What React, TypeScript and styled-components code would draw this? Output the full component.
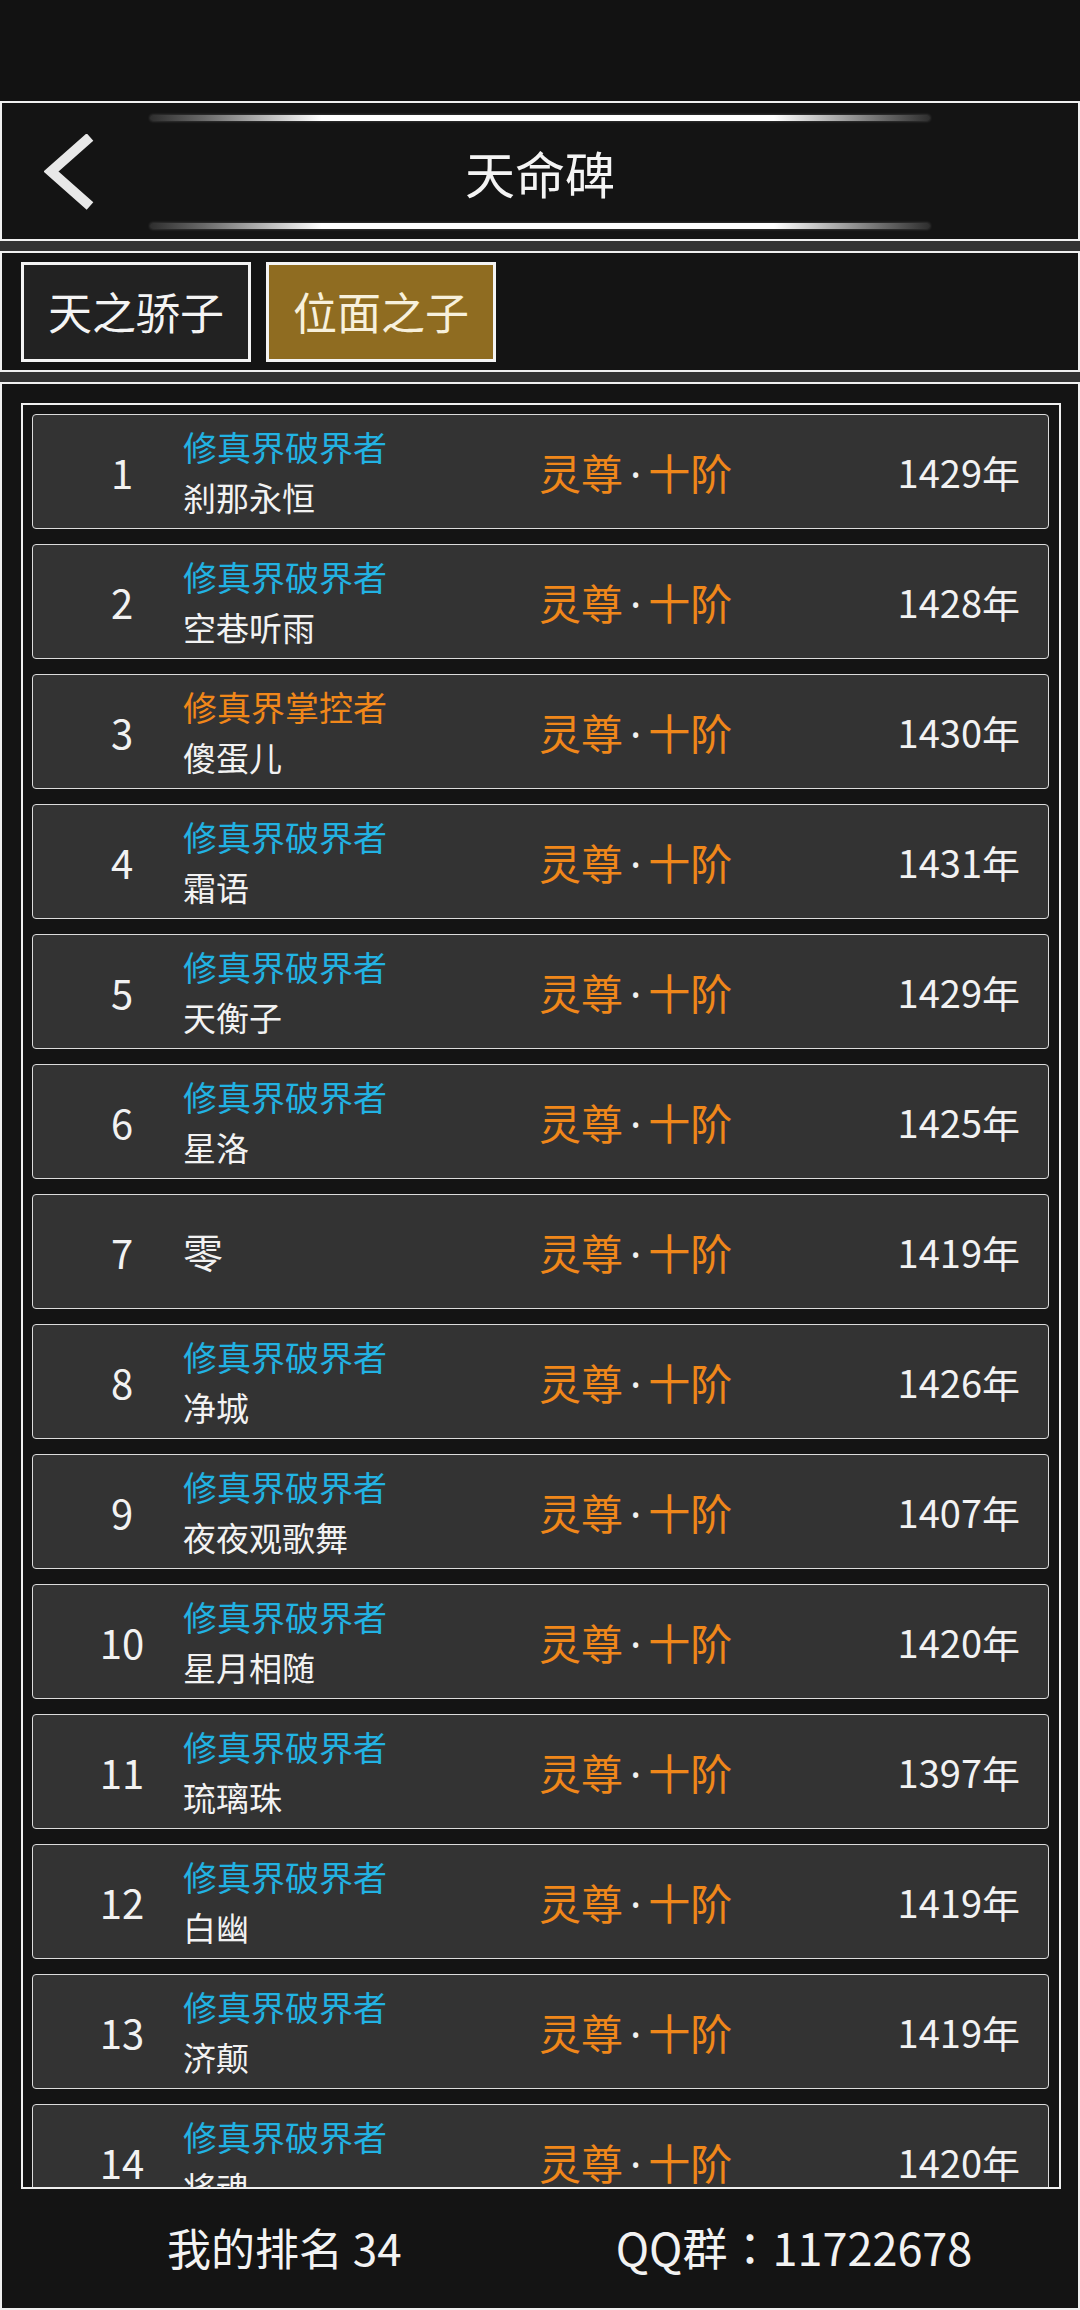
import styled, { createGlobalStyle } from "styled-components";

const GlobalStyle = createGlobalStyle`
  html, body {
    margin: 0;
    padding: 0;
    background: #333333;
  }
  body {
    font-family: "Noto Sans CJK SC", "Noto Sans", sans-serif;
    color: #f2f2f2;
  }
  * {
    box-sizing: border-box;
  }
`;

interface RankItem {
  rank: number;
  title?: string;
  master?: boolean;
  name: string;
  years: number;
}

const rankList: RankItem[] = [
  { rank: 1, title: "修真界破界者", name: "刹那永恒", years: 1429 },
  { rank: 2, title: "修真界破界者", name: "空巷听雨", years: 1428 },
  { rank: 3, title: "修真界掌控者", master: true, name: "傻蛋儿", years: 1430 },
  { rank: 4, title: "修真界破界者", name: "霜语", years: 1431 },
  { rank: 5, title: "修真界破界者", name: "天衡子", years: 1429 },
  { rank: 6, title: "修真界破界者", name: "星洛", years: 1425 },
  { rank: 7, name: "零", years: 1419 },
  { rank: 8, title: "修真界破界者", name: "净城", years: 1426 },
  { rank: 9, title: "修真界破界者", name: "夜夜观歌舞", years: 1407 },
  { rank: 10, title: "修真界破界者", name: "星月相随", years: 1420 },
  { rank: 11, title: "修真界破界者", name: "琉璃珠", years: 1397 },
  { rank: 12, title: "修真界破界者", name: "白幽", years: 1419 },
  { rank: 13, title: "修真界破界者", name: "济颠", years: 1419 },
  { rank: 14, title: "修真界破界者", name: "将魂", years: 1420 },
];

const App = () => {
  return (
    <>
      <GlobalStyle />
      <Page>
        <StatusBar />
        <Header>
          <BackBtn>
            <svg width="52" height="76" viewBox="0 0 52 76">
              <polyline points="46,3 7,37.5 46,72" fill="none" stroke="#e8e8e8" strokeWidth="10" />
            </svg>
          </BackBtn>
          <TitleArea>
            <GlowLine />
            <Title>天命碑</Title>
            <GlowLine />
          </TitleArea>
        </Header>
        <TabBar>
          <Tab>天之骄子</Tab>
          <Tab $active>位面之子</Tab>
        </TabBar>
        <ListSection>
          <ListBox>
            {rankList.map(item => (
              <Row key={item.rank}>
                <RankNum>{item.rank}</RankNum>
                <Info>
                  {item.title && <PlayerTitle $master={item.master}>{item.title}</PlayerTitle>}
                  <PlayerName $solo={!item.title}>{item.name}</PlayerName>
                </Info>
                <Realm>
                  灵尊<Dot>·</Dot>十阶
                </Realm>
                <Years>{item.years}年</Years>
              </Row>
            ))}
          </ListBox>
          <Footer>
            <FooterText>我的排名 34</FooterText>
            <FooterText $wide>
              QQ群<Colon>：</Colon>11722678
            </FooterText>
          </Footer>
        </ListSection>
      </Page>
    </>
  );
};

const Page = styled.div`
  width: 1080px;
  height: 2310px;
  display: flex;
  flex-direction: column;
  gap: 10px;
  overflow: hidden;
  background: #333333;
`;

const StatusBar = styled.div`
  height: 101px;
  margin-bottom: -10px;
  background: #121212;
`;

const Section = styled.div`
  border: 2px solid #f0f0f0;
  background: #141414;
`;

const Header = styled(Section)`
  height: 140px;
  display: grid;
  grid-template-columns: 148px 780px 1fr;
  align-items: center;
`;

const BackBtn = styled.div`
  display: flex;
  align-items: center;
  padding-left: 42px;
  padding-top: 2px;
`;

const TitleArea = styled.div`
  display: flex;
  flex-direction: column;
  align-items: center;
  justify-content: space-between;
  height: 100%;
  padding: 12px 0 10px;
`;

const GlowLine = styled.div`
  width: 100%;
  height: 6px;
  border-radius: 3px;
  background: linear-gradient(
    90deg,
    #2e2e2e 0%,
    #6a6a6a 7%,
    #ffffff 22%,
    #ffffff 80%,
    #6a6a6a 94%,
    #2e2e2e 100%
  );
  box-shadow: 0 0 3px rgba(255, 255, 255, 0.25);
`;

const Title = styled.div`
  font-size: 50px;
  line-height: 60px;
  color: #f4f4f4;
`;

const TabBar = styled(Section)`
  height: 121px;
  display: flex;
  gap: 15px;
  padding: 9px 19px 0;
`;

const Tab = styled.div<{ $active?: boolean }>`
  width: 230px;
  height: 100px;
  border: 3px solid #f4f4f4;
  background: ${({ $active }) => ($active ? "#8f6c21" : "#222222")};
  color: ${({ $active }) => ($active ? "#f7f0dc" : "#f4f4f4")};
  font-size: 44px;
  display: flex;
  align-items: center;
  justify-content: center;
  padding-bottom: 2px;
`;

const ListSection = styled(Section)`
  flex: 1;
  display: flex;
  flex-direction: column;
  padding: 19px 17px 0 19px;
`;

const ListBox = styled.div`
  height: 1786px;
  border: 2px solid #f0f0f0;
  padding: 9px 10px 0 9px;
  display: flex;
  flex-direction: column;
  gap: 15px;
  overflow: hidden;
`;

const Row = styled.div`
  flex: 0 0 115px;
  display: flex;
  align-items: center;
  background: #333333;
  border: 1.5px solid #dcdcdc;
  border-radius: 4px;
  padding-right: 28px;
`;

const RankNum = styled.div`
  width: 86px;
  margin-left: 46px;
  text-align: center;
  font-size: 40px;
  color: #f2f2f2;
`;

const Info = styled.div`
  width: 356px;
  margin-left: 18px;
  display: flex;
  flex-direction: column;
`;

const PlayerTitle = styled.div<{ $master?: boolean }>`
  font-size: 34px;
  line-height: 51px;
  color: ${({ $master }) => ($master ? "#f0871a" : "#22b2e2")};
`;

const PlayerName = styled.div<{ $solo?: boolean }>`
  font-size: ${({ $solo }) => ($solo ? "40px" : "33px")};
  line-height: 51px;
  color: #f2f2f2;
`;

const Realm = styled.div`
  flex: 1;
  font-size: 42px;
  color: #f0871a;
  white-space: nowrap;
`;

const Dot = styled.span`
  font-family: "Noto Sans", sans-serif;
  color: #f2f2f2;
  margin: 0 7px;
`;

const Years = styled.div`
  font-size: 38px;
  color: #f2f2f2;
  white-space: nowrap;
`;

const Footer = styled.div`
  flex: 1;
  display: flex;
  align-items: center;
  gap: 214px;
  padding: 0 0 4px 146px;
`;

const FooterText = styled.div<{ $wide?: boolean }>`
  font-size: ${({ $wide }) => ($wide ? "45px" : "44px")};
  color: #f2f2f2;
`;

const Colon = styled.span`
  font-family: "Noto Sans CJK JP", "Noto Sans CJK SC", sans-serif;
`;

export default App;
